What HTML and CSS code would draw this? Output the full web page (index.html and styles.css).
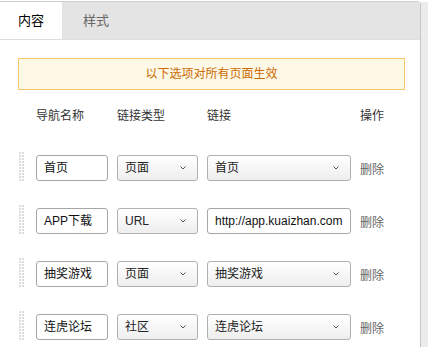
FILE: index.html
```html
<html>
  <head>
    <meta charset="UTF-8">
    <link rel="stylesheet" href="styles.css">
  </head>
  <body>
    <div class="frame">
      <div class="panel">
        <div class="tabs">
          <span class="tab active">内容</span>
          <span class="tab second">样式</span>
        </div>

        <div class="content">
          <div class="notice">以下选项对所有页面生效</div>

          <div class="grid head">
            <span></span>
            <span>导航名称</span>
            <span>链接类型</span>
            <span>链接</span>
            <span>操作</span>
          </div>

          <div class="list">
            <div class="grid row">
              <span class="handle"></span>
              <div class="field">首页</div>
              <div class="select"><span>页面</span><svg width="6" height="4"><path d="M.5 .5 3 3 5.5 .5" fill="none" stroke="#555"/></svg></div>
              <div class="select"><span>首页</span><svg width="6" height="4"><path d="M.5 .5 3 3 5.5 .5" fill="none" stroke="#555"/></svg></div>
              <a class="del">删除</a>
            </div>

            <div class="grid row">
              <span class="handle"></span>
              <div class="field">APP下载</div>
              <div class="select"><span>URL</span><svg width="6" height="4"><path d="M.5 .5 3 3 5.5 .5" fill="none" stroke="#555"/></svg></div>
              <div class="field">http://app.kuaizhan.com</div>
              <a class="del">删除</a>
            </div>

            <div class="grid row">
              <span class="handle"></span>
              <div class="field">抽奖游戏</div>
              <div class="select"><span>页面</span><svg width="6" height="4"><path d="M.5 .5 3 3 5.5 .5" fill="none" stroke="#555"/></svg></div>
              <div class="select"><span>抽奖游戏</span><svg width="6" height="4"><path d="M.5 .5 3 3 5.5 .5" fill="none" stroke="#555"/></svg></div>
              <a class="del">删除</a>
            </div>

            <div class="grid row">
              <span class="handle"></span>
              <div class="field">连虎论坛</div>
              <div class="select"><span>社区</span><svg width="6" height="4"><path d="M.5 .5 3 3 5.5 .5" fill="none" stroke="#555"/></svg></div>
              <div class="select"><span>连虎论坛</span><svg width="6" height="4"><path d="M.5 .5 3 3 5.5 .5" fill="none" stroke="#555"/></svg></div>
              <a class="del">删除</a>
            </div>
          </div>
        </div>
      </div>
      <div class="strip"></div>
    </div>
  </body>
</html>
```

FILE: styles.css
```css
body {
  margin: 0;
  background: #fff;
  font-family: "Liberation Sans", "Noto Sans CJK SC", sans-serif;
  font-size: 12px;
  color: #333;
}

.frame {
  display: flex;
  height: 347px;
  overflow: hidden;
}

.panel {
  width: 420px;
  margin-top: 1px;
  border-top: 1px solid #cfcfcf;
  border-right: 1px solid #c8c8c8;
  border-top-right-radius: 4px;
  overflow: hidden;
}

.strip {
  flex: 1;
  margin-top: 2px;
  background: #ececec;
}

.tabs {
  display: flex;
  height: 37px;
  background: #e4e4e5;
  border-bottom: 1px solid #dedede;
}

.tab {
  width: 62px;
  line-height: 37px;
  text-align: center;
  font-size: 13px;
  color: #666;
}

.tab.second {
  width: 68px;
}

.tab.active {
  background: #fff;
  color: #000;
}

.content {
  padding: 18px 15px 0 18px;
}

.notice {
  height: 32px;
  box-sizing: border-box;
  line-height: 30px;
  text-align: center;
  background: #fef8e6;
  border: 1px solid #f8c76a;
  color: #cc6a00;
}

.grid {
  display: grid;
  grid-template-columns: 9px 72px 81px 144px auto;
  column-gap: 9px;
  align-items: center;
}

.head {
  margin-top: 18px;
  line-height: 16px;
  color: #333;
}

.list {
  display: flex;
  flex-direction: column;
  gap: 27px;
  margin-top: 31px;
}

.row {
  height: 26px;
}

.handle {
  align-self: start;
  margin: -3px 0 0 1px;
  width: 5px;
  height: 29px;
  background-color: #dcdcdc;
  background-image: linear-gradient(#fff 1px, transparent 1px), linear-gradient(90deg, #fff 1px, transparent 1px);
  background-size: 3px 3px;
  background-position: -1px -1px;
}

.field,
.select {
  height: 26px;
  box-sizing: border-box;
  border: 1px solid #a6a6a6;
  border-radius: 3px;
  padding: 0 7px;
  line-height: 24px;
  white-space: nowrap;
  overflow: hidden;
}

.field {
  background: #fff;
  color: #111;
}

.select {
  display: flex;
  justify-content: space-between;
  align-items: center;
  padding-right: 11px;
  background: linear-gradient(#fff, #eeeeee);
  border-color: #b0b0b0;
  color: #222;
}

.del {
  color: #666;
}
```
